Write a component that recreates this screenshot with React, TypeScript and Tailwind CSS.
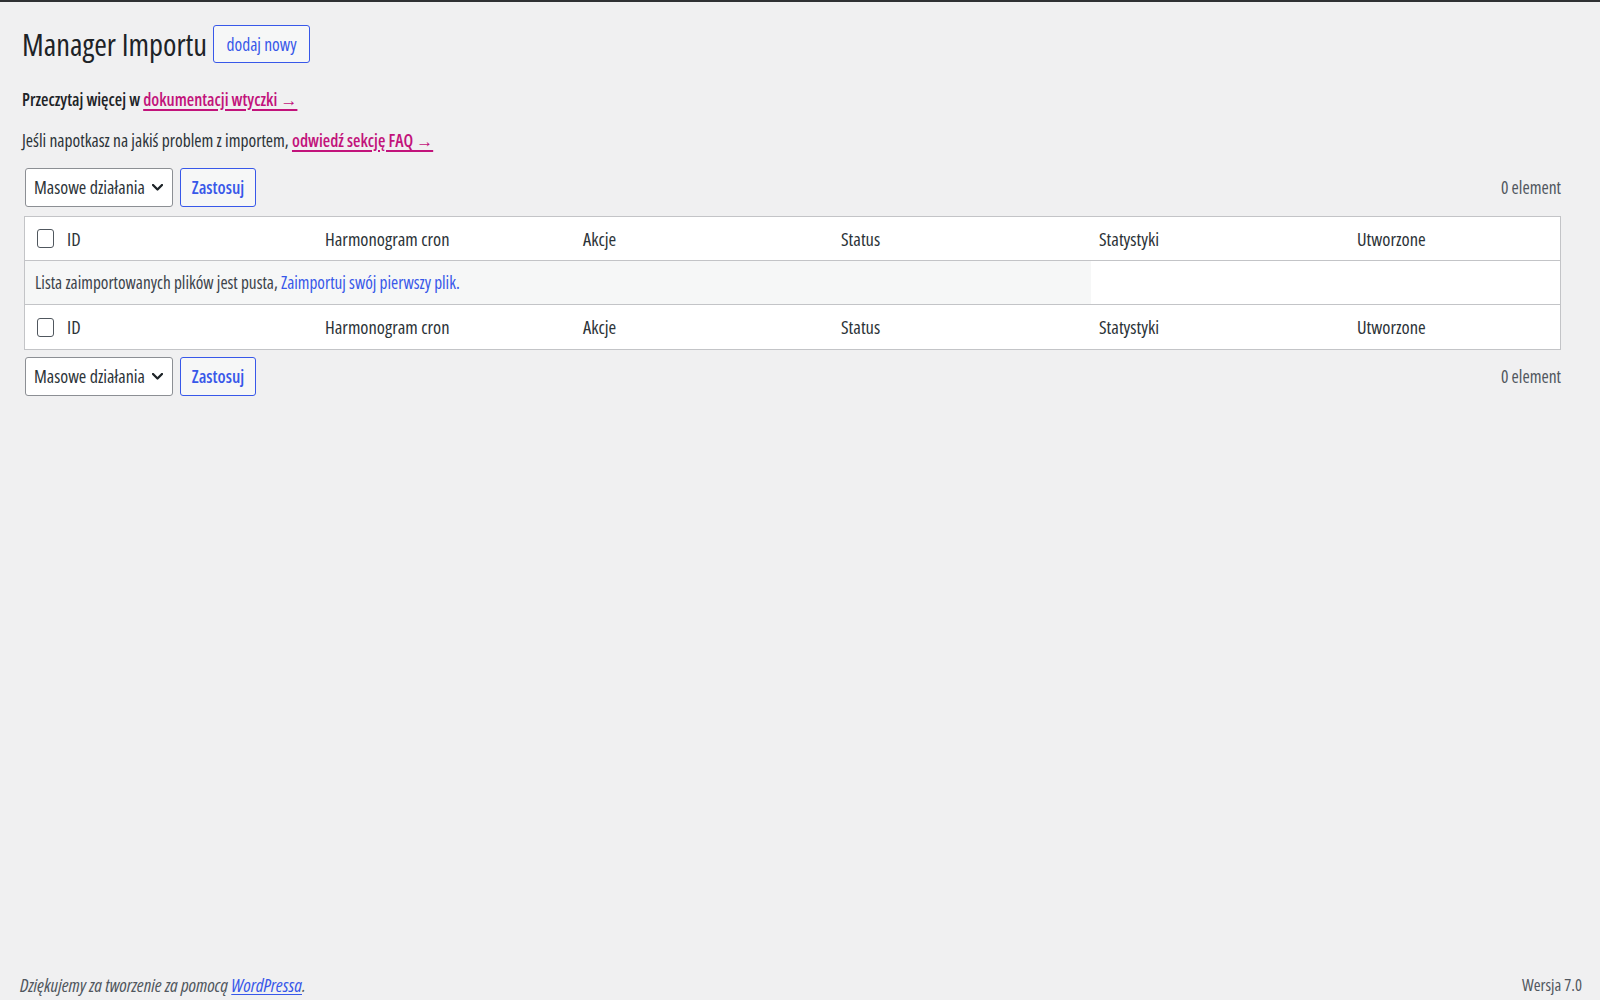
import React from "react";

const FONT = "font-['Open_Sans','Noto_Sans',sans-serif] font-stretch-[75%]";

function Chevron() {
  return (
    <svg width="11" height="7" viewBox="0 0 11 7" className="shrink-0">
      <polyline
        points="1,1 5.5,5.5 10,1"
        fill="none"
        stroke="#1d2327"
        strokeWidth="2.3"
        strokeLinecap="round"
        strokeLinejoin="round"
      />
    </svg>
  );
}

function Toolbar() {
  return (
    <div className="flex items-center justify-between">
      <div className="flex items-center gap-[7px] ml-[3px]">
        <div className="flex items-center justify-between w-[148px] h-[39px] bg-white border border-[#8c8f94] rounded-[3px] pl-[8px] pr-[9px] text-[18px] text-[#2c3338] whitespace-nowrap">
          <span>Masowe działania</span>
          <Chevron />
        </div>
        <div className="flex items-center justify-center w-[76px] h-[39px] bg-[#f6f7f7] border border-[#3858e9] rounded-[3px] text-[17.5px] font-semibold text-[#3858e9]">
          Zastosuj
        </div>
      </div>
      <span className="text-[17.5px] text-[#50575e]">0 element</span>
    </div>
  );
}

function Checkbox() {
  return <div className="w-[17px] h-[19px] border border-[#50575e] rounded-[3px] bg-white" />;
}

const COLS = ["ID", "Harmonogram cron", "Akcje", "Status", "Statystyki", "Utworzone"];

function HeadRow({ border }: { border: "b" | "t" }) {
  return (
    <div
      className={
        "grid grid-cols-[34px_258px_258px_258px_258px_258px_1fr] items-center h-[44px] bg-white " +
        (border === "b" ? "border-b border-[#c3c4c7]" : "")
      }
    >
      <div className="pl-[12px] flex items-center">
        <Checkbox />
      </div>
      {COLS.map((c) => (
        <div key={c} className="pl-[8px] text-[18.5px] text-[#2c3338] whitespace-nowrap">
          {c}
        </div>
      ))}
    </div>
  );
}

export default function App() {
  return (
    <div className={"min-h-[1000px] bg-[#f0f0f1] flex flex-col " + FONT}>
      <div className="h-[2px] bg-[#2f3133]" />
      <div className="pl-[22px] pr-[39px]">
        <div className="flex items-center gap-[6px] mt-[23px] h-[38px]">
          <h1 className="text-[30.5px] leading-none font-normal text-[#1d2327]">Manager Importu</h1>
          <div className="flex items-center justify-center w-[97px] h-[38px] border border-[#3858e9] rounded-[3px] bg-[#f6f7f7] text-[17.5px] text-[#3858e9]">
            dodaj nowy
          </div>
        </div>
        <p className="mt-[25px] h-[24px] leading-[24px] text-[17px] font-semibold text-[#1d2327]">
          Przeczytaj więcej w{" "}
          <a className="text-[#c2137b] underline decoration-[1.5px] underline-offset-[3px]">
            dokumentacji wtyczki →
          </a>
        </p>
        <p className="mt-[16px] h-[24px] leading-[24px] text-[17.5px] text-[#2c3338]">
          Jeśli napotkasz na jakiś problem z importem,{" "}
          <a className="text-[17px] font-semibold text-[#c2137b] underline decoration-[1.5px] underline-offset-[3px]">
            odwiedź sekcję FAQ →
          </a>
        </p>
        <div className="mt-[16px]">
          <Toolbar />
        </div>
        <div className="mt-[9px] ml-[2px] border border-[#c3c4c7] bg-white">
          <HeadRow border="b" />
          <div className="flex h-[44px] border-b border-[#c3c4c7]">
            <div className="w-[1066px] bg-[#f6f7f7] flex items-center pl-[10px] text-[17.3px] text-[#3c434a] whitespace-nowrap">
              Lista zaimportowanych plików jest pusta,&nbsp;
              <a className="text-[#3858e9]">Zaimportuj swój pierwszy plik.</a>
            </div>
            <div className="flex-1 bg-white" />
          </div>
          <HeadRow border="t" />
        </div>
        <div className="mt-[7px]">
          <Toolbar />
        </div>
      </div>
      <div className="mt-auto flex items-center justify-between pl-[20px] pr-[18px] h-[30px] text-[#50575e]">
        <span className="italic text-[18.5px]">
          Dziękujemy za tworzenie za pomocą{" "}
          <a className="text-[#3858e9] underline underline-offset-2">WordPressa</a>.
        </span>
        <span className="text-[16.5px]">Wersja 7.0</span>
      </div>
    </div>
  );
}
